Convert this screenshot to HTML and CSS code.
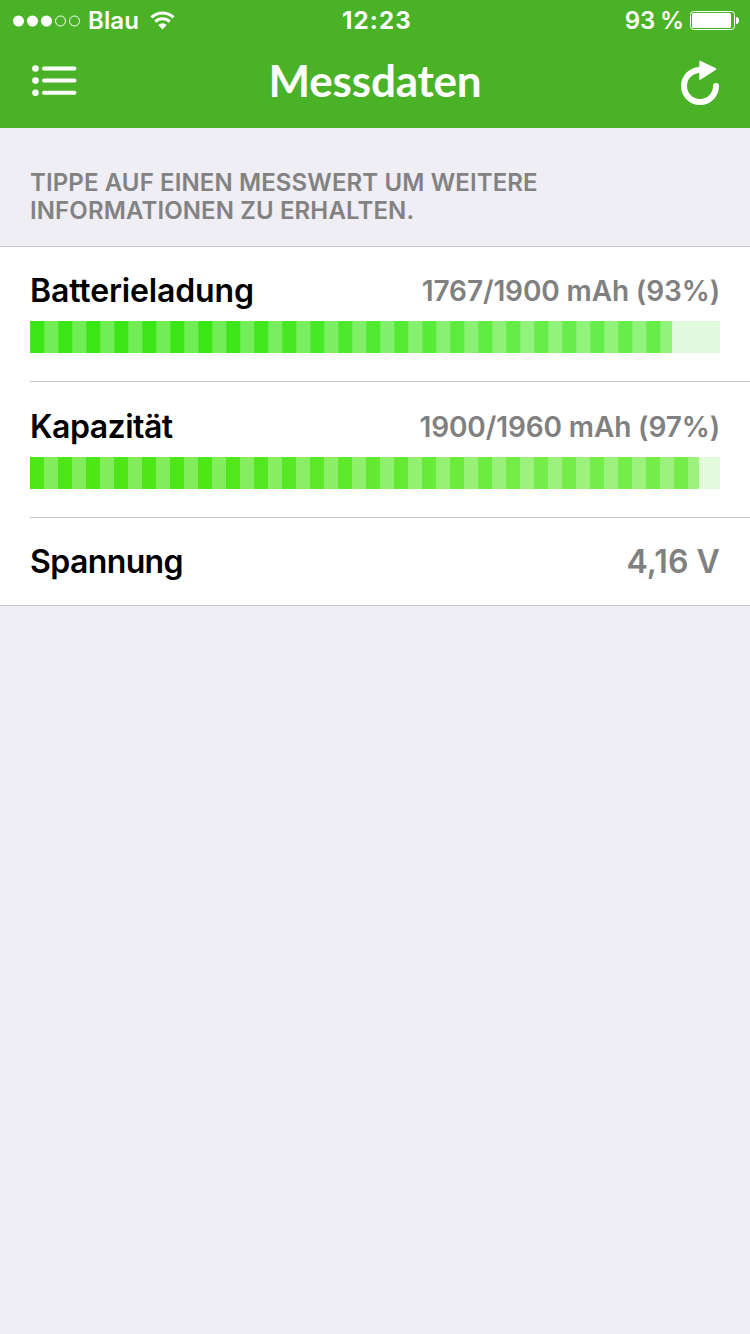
FILE: index.html
```html
<!DOCTYPE html>
<html lang="de">
<head>
<meta charset="utf-8">
<title>Messdaten</title>
<link rel="stylesheet" href="styles.css">
</head>
<body>
<header class="header">
  <div class="status">
    <div class="status-side">
      <svg class="signal" width="68" height="12" viewBox="0 0 68 12">
        <g fill="#fff"><circle cx="5.5" cy="6" r="5.5"/><circle cx="19.5" cy="6" r="5.5"/><circle cx="33.5" cy="6" r="5.5"/></g>
        <g fill="none" stroke="#fff"><circle cx="47.5" cy="6" r="5"/><circle cx="61.5" cy="6" r="5"/></g>
      </svg>
      <span class="carrier">Blau</span>
      <svg class="wifi" width="26" height="19" viewBox="0 0 26 19">
        <g fill="none" stroke="#fff" stroke-width="3">
          <path d="M1.500 6.300a16 16 0 0 1 22 0"/>
          <path d="M5.300 10.600a10.400 10.400 0 0 1 14.400 0"/>
        </g>
        <path fill="#fff" d="M8.300 14a6 6 0 0 1 8.400 0L12.500 18.500z"/>
      </svg>
    </div>
    <span class="clock">12:23</span>
    <div class="status-side status-right">
      <span class="percent">93 %</span>
      <svg class="battery" width="49" height="19" viewBox="0 0 49 19">
        <rect x=".5" y=".5" width="44" height="18" rx="3" fill="none" stroke="#fff"/>
        <rect x="2" y="2" width="39" height="15" rx="1.500" fill="#fff"/>
        <path fill="#fff" d="M46 6c2 0 3 1.500 3 3.500s-1 3.500-3 3.500z"/>
      </svg>
    </div>
  </div>
  <nav class="navbar">
    <svg class="list-icon" width="46" height="32" viewBox="0 0 46 32">
      <g fill="#fff"><circle cx="3.500" cy="3.500" r="3.300"/><circle cx="3.500" cy="15.600" r="3.300"/><circle cx="3.500" cy="27.700" r="3.300"/></g>
      <path d="M12 3.500h30.500M12 15.600h30.500M12 27.700h30.500" stroke="#fff" stroke-width="4" stroke-linecap="round"/>
    </svg>
    <h1 class="title">Messdaten</h1>
    <svg class="reload-icon" width="40" height="46" viewBox="0 0 40 46">
      <path d="M20 10A16 16 0 1 0 36 26" fill="none" stroke="#fff" stroke-width="6" stroke-linecap="round"/>
      <path d="M20 1.500L35.500 9L20 19z" fill="#fff" stroke="#fff" stroke-width="1.500" stroke-linejoin="round"/>
    </svg>
  </nav>
</header>
<main>
  <p class="hint">TIPPE AUF EINEN MESSWERT UM WEITERE<br>INFORMATIONEN ZU ERHALTEN.</p>
  <section class="list">
    <div class="row">
      <div class="line"><span class="label label-charge">Batterieladung</span><span class="value">1767/1900 mAh (93%)</span></div>
      <div class="bar bar-charge"><div class="fill" style="width:642px"></div></div>
    </div>
    <div class="row">
      <div class="line"><span class="label label-capacity">Kapazität</span><span class="value">1900/1960 mAh (97%)</span></div>
      <div class="bar bar-capacity"><div class="fill" style="width:669px"></div></div>
    </div>
    <div class="row row-plain">
      <div class="line"><span class="label label-voltage">Spannung</span><span class="value value-large">4,16 V</span></div>
    </div>
  </section>
</main>
</body>
</html>
```
FILE: styles.css
```css
* { box-sizing: border-box; }
body { margin: 0; min-height: 1334px; background: #efeef4; font-family: Inter, "Liberation Sans", sans-serif; }
svg { display: block; }
.header { height: 128px; background: #4ab226; color: #fff; }
.status { display: grid; grid-template-columns: 1fr auto 1fr; height: 40px; align-items: center; padding: 0 11px 0 13px; font-size: 24px; line-height: 40px; }
.status-side { display: flex; align-items: center; }
.status-right { justify-content: flex-end; }
.carrier { margin-left: 7px; font-weight: 600; letter-spacing: 0.1px; }
.carrier, .clock, .percent { padding-top: 1px; }
.wifi { margin-left: 11px; }
.clock { font-weight: 700; letter-spacing: 1.2px; padding-left: 2px; }
.percent { margin-right: 6px; font-weight: 600; letter-spacing: 0; word-spacing: -1.5px; }
.navbar { display: grid; grid-template-columns: 1fr auto 1fr; align-items: center; height: 82px; padding: 0 30px; }
.title { margin: 0 0 3px; font: 700 44px/60px Lato, sans-serif; letter-spacing: -0.2px; }
.list-icon { margin: 0 0 0 2px; }
.reload-icon { margin-top: 4px; justify-self: end; }
.hint { margin: 0; height: 118px; padding: 41px 30px 0; font-size: 24px; line-height: 28px; font-weight: 600; letter-spacing: 0.12px; color: #828282; }
.list { background: #fff; border-top: 1px solid #c8c7cc; border-bottom: 1px solid #c8c7cc; padding-left: 30px; }
.row { height: 136px; padding: 25px 30px 0 0; border-bottom: 1px solid #c8c7cc; }
.row:first-child { height: 135px; padding-top: 24px; }
.row-plain { height: 87px; padding-top: 24px; border-bottom: 0; }
.line { display: flex; justify-content: space-between; align-items: center; height: 40px; margin-bottom: 10px; line-height: 40px; white-space: nowrap; }
.label { font-size: 32px; font-weight: 600; color: #000; }
.label-charge { letter-spacing: -0.15px; }
.label-capacity { letter-spacing: -0.5px; }
.label-voltage { letter-spacing: -0.6px; }
.value { font-size: 28px; font-weight: 600; letter-spacing: -0.12px; color: #808080; }
.value-large { font-size: 32px; letter-spacing: 0.1px; }
.bar { height: 32px; }
.bar-charge { background: #e1f9de; }
.bar-capacity { background: #e4fadc; }
.fill { height: 100%; }
.bar-charge .fill { background: repeating-linear-gradient(90deg, rgba(255,255,255,.1) 0 1px, transparent 1px 14px, rgba(255,255,255,.2) 14px 15px, rgba(255,255,255,.28) 15px 28px), linear-gradient(90deg, #3ae614 0 180px, #67ed4a 500px); }
.bar-capacity .fill { background: repeating-linear-gradient(90deg, transparent 0 14px, rgba(255,255,255,.29) 14px 28px), linear-gradient(90deg, #4fe617 0 180px, #74ed48 500px); }
```
